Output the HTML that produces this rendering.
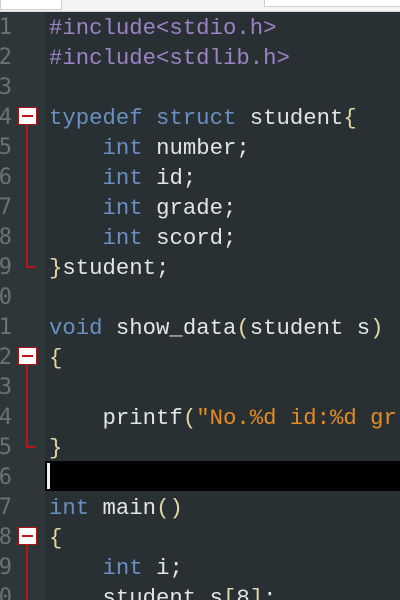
<!DOCTYPE html>
<html><head><style>
html,body{margin:0;padding:0;width:400px;height:600px;overflow:hidden;background:#293034;}
#w{position:absolute;left:0;top:0;width:400px;height:600px;overflow:hidden;}
.top{position:absolute;left:0;top:0;width:400px;height:11px;background:#f3f3f3;border-bottom:1px solid #d8d8d8;}
.t1{position:absolute;left:0;top:0;width:60px;height:9px;background:#fff;border:1px solid #cfcfcf;border-top:none;}
.t2{position:absolute;left:264px;top:0;width:135px;height:6px;background:#fff;border:1px solid #d0d0d0;border-top:none;}
.gut{position:absolute;left:0;top:12px;width:45px;height:600px;background:#2f3639;}
.ln{position:absolute;left:-30px;width:42px;text-align:right;height:30px;line-height:30px;margin-top:3px;font:22px "DejaVu Sans Mono","Liberation Mono",monospace;color:#6a7276;}
.cl{position:absolute;left:49px;height:30px;line-height:30px;margin-top:3px;font:22.3px "Liberation Mono","DejaVu Sans Mono",monospace;color:#e4e4e4;white-space:pre;}
.p{color:#9b83c4}.k{color:#6a8fc2}.b{color:#e4d7a2}.s{color:#e48b22}
.box{position:absolute;left:18px;width:17px;height:16px;background:#fff;border:1px solid #b01515;}
.box:after{content:"";position:absolute;left:3px;top:7px;width:11px;height:2px;background:#c0181a;}
.vl{position:absolute;left:26px;width:2px;background:#b31717;}
.hl{position:absolute;left:26px;width:10px;height:2px;background:#b31717;}
.cur{position:absolute;left:45px;top:461px;width:355px;height:30px;background:#000;}
.caret{position:absolute;left:47px;top:463px;width:3px;height:26px;background:#eee;}
</style></head><body><div id="w">
<div class="top"><div class="t1"></div><div class="t2"></div></div>
<div class="gut"></div>
<div class="cur"></div><div class="caret"></div>
<div class="ln" style="top:12px">1</div>
<div class="ln" style="top:42px">2</div>
<div class="ln" style="top:72px">3</div>
<div class="ln" style="top:102px">4</div>
<div class="ln" style="top:132px">5</div>
<div class="ln" style="top:162px">6</div>
<div class="ln" style="top:192px">7</div>
<div class="ln" style="top:222px">8</div>
<div class="ln" style="top:252px">9</div>
<div class="ln" style="top:282px">10</div>
<div class="ln" style="top:312px">11</div>
<div class="ln" style="top:342px">12</div>
<div class="ln" style="top:372px">13</div>
<div class="ln" style="top:402px">14</div>
<div class="ln" style="top:432px">15</div>
<div class="ln" style="top:462px">16</div>
<div class="ln" style="top:492px">17</div>
<div class="ln" style="top:522px">18</div>
<div class="ln" style="top:552px">19</div>
<div class="ln" style="top:582px">20</div>

<div class="vl" style="top:124px;height:143px"></div><div class="hl" style="top:266px"></div>
<div class="box" style="top:107px"></div>
<div class="vl" style="top:364px;height:83px"></div><div class="hl" style="top:446px"></div>
<div class="box" style="top:347px"></div>
<div class="vl" style="top:544px;height:60px"></div>
<div class="box" style="top:527px"></div>

<div class="cl p" style="top:12px">#include&lt;stdio.h&gt;</div>
<div class="cl p" style="top:42px">#include&lt;stdlib.h&gt;</div>
<div class="cl" style="top:102px"><span class="k">typedef struct</span> student<span class="b">{</span></div>
<div class="cl" style="top:132px">    <span class="k">int</span> number;</div>
<div class="cl" style="top:162px">    <span class="k">int</span> id;</div>
<div class="cl" style="top:192px">    <span class="k">int</span> grade;</div>
<div class="cl" style="top:222px">    <span class="k">int</span> scord;</div>
<div class="cl" style="top:252px"><span class="b">}</span>student;</div>
<div class="cl" style="top:312px"><span class="k">void</span> show_data<span class="b">(</span>student s<span class="b">)</span></div>
<div class="cl" style="top:342px"><span class="b">{</span></div>
<div class="cl" style="top:402px">    printf<span class="b">(</span><span class="s">"No.%d id:%d gr</span></div>
<div class="cl" style="top:432px"><span class="b">}</span></div>
<div class="cl" style="top:492px"><span class="k">int</span> main<span class="b">()</span></div>
<div class="cl" style="top:522px"><span class="b">{</span></div>
<div class="cl" style="top:552px">    <span class="k">int</span> i;</div>
<div class="cl" style="top:582px">    student s<span class="b">[</span>8<span class="b">]</span>;</div>
</div></body></html>
